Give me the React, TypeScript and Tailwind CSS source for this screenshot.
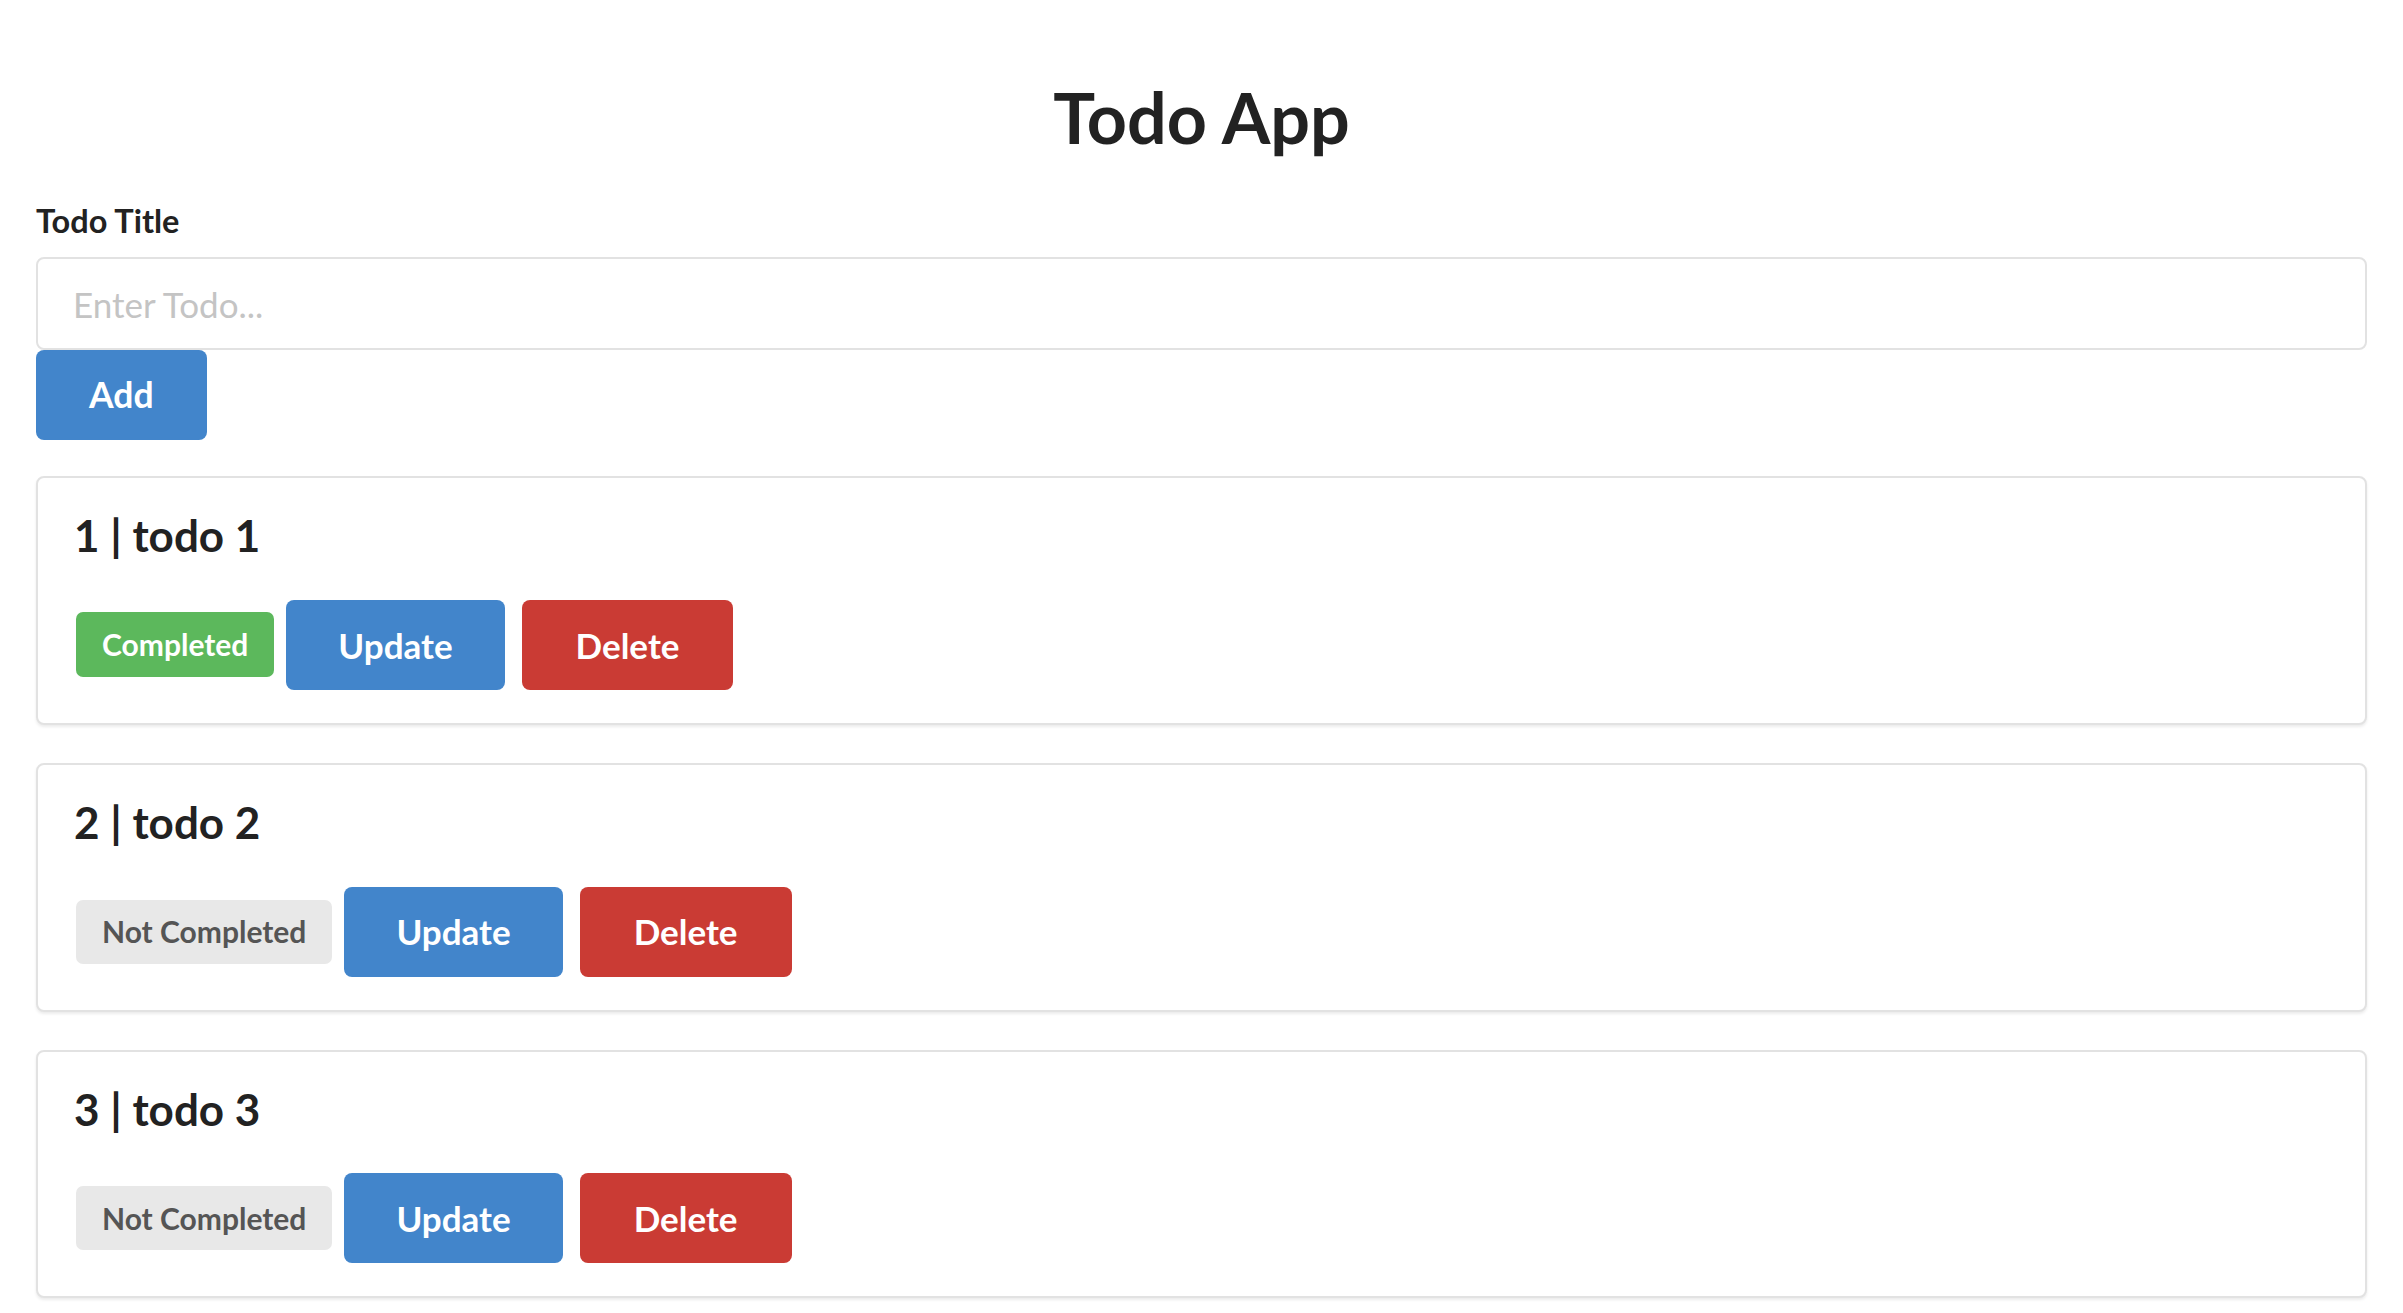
import { useState } from 'react';

type Todo = {
  id: number;
  title: string;
  completed: boolean;
};

const initialTodos: Todo[] = [
  { id: 1, title: 'todo 1', completed: true },
  { id: 2, title: 'todo 2', completed: false },
  { id: 3, title: 'todo 3', completed: false },
];

export default function App() {
  const [todos, setTodos] = useState<Todo[]>(initialTodos);
  const [title, setTitle] = useState('');

  const addTodo = () => {
    if (!title.trim()) return;
    const nextId = todos.length ? Math.max(...todos.map((t) => t.id)) + 1 : 1;
    setTodos([...todos, { id: nextId, title, completed: false }]);
    setTitle('');
  };

  const toggleTodo = (id: number) => {
    setTodos(todos.map((t) => (t.id === id ? { ...t, completed: !t.completed } : t)));
  };

  const deleteTodo = (id: number) => {
    setTodos(todos.filter((t) => t.id !== id));
  };

  return (
    <div className="min-h-screen bg-white px-[36px] pb-[18px] font-['Lato',sans-serif] text-[#222]">
      <h1 className="pt-[75px] text-center text-[70px] font-bold leading-[1.2]">Todo App</h1>

      <label className="mt-[42px] block text-[32.5px] font-bold leading-[1.2]">Todo Title</label>
      <input
        value={title}
        onChange={(e) => setTitle(e.target.value)}
        placeholder="Enter Todo..."
        className="mt-[17px] block h-[93px] w-full rounded-[8px] border-2 border-[#e2e2e2] px-[35px] text-[35px] outline-none placeholder:text-[#c4c4c4]"
      />
      <button
        onClick={addTodo}
        className="block h-[90px] rounded-[8px] bg-[#4285cb] px-[53px] text-[35.5px] font-bold text-white"
      >
        Add
      </button>

      <div className="mt-[36px] flex flex-col gap-[38px]">
        {todos.map((todo) => (
          <div
            key={todo.id}
            className="rounded-[8px] border-2 border-[#e2e2e2] bg-white px-[36px] pb-[33px] pt-[31px] shadow-[0_2px_3px_rgba(0,0,0,0.08)]"
          >
            <h3 className="text-[44px] font-bold leading-[1.2]">
              {todo.id} | {todo.title}
            </h3>
            <div className="mt-[38px] flex items-center">
              {todo.completed ? (
                <span className="ml-[2px] flex h-[65px] items-center rounded-[7px] bg-[#5cb85c] px-[26px] text-[30px] font-bold text-white">
                  Completed
                </span>
              ) : (
                <span className="ml-[2px] flex h-[64px] items-center rounded-[7px] bg-[#e8e8e8] px-[26px] text-[30px] font-bold text-[#555]">
                  Not Completed
                </span>
              )}
              <button
                onClick={() => toggleTodo(todo.id)}
                className="ml-[12px] h-[90px] rounded-[8px] bg-[#4285cb] px-[52px] text-[35px] font-bold text-white"
              >
                Update
              </button>
              <button
                onClick={() => deleteTodo(todo.id)}
                className="ml-[17px] h-[90px] rounded-[8px] bg-[#ca3b34] px-[54px] text-[35px] font-bold text-white"
              >
                Delete
              </button>
            </div>
          </div>
        ))}
      </div>
    </div>
  );
}
